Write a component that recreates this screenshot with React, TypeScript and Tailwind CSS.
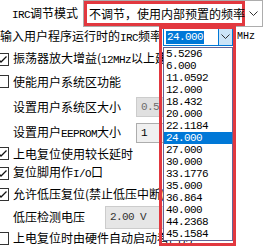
import React from 'react';

const freqs = ['5.5296', '6.000', '11.0592', '12.000', '18.432', '20.000', '22.1184', '24.000', '27.000', '30.000', '33.1776', '35.000', '36.864', '40.000', '44.2368', '45.1584'];

const mono = { fontFamily: '"Liberation Mono", monospace', fontSize: '11px', letterSpacing: '-0.6px' };

// half-width latin, like the old bitmap font
const L = ({ children }: { children: React.ReactNode }) => <span style={mono}>{children}</span>;

const Check = ({ checked }: { checked?: boolean }) => (
  <span className="-ml-[4px] mr-[4px] inline-flex h-[13px] w-[13px] shrink-0 items-center justify-center border border-[#333] bg-white">
    {checked && (
      <svg width="11" height="11" viewBox="0 0 11 11">
        <path d="M1.5 5.5 L4 8 L9.5 2.5" stroke="#111" strokeWidth="1.3" fill="none" />
      </svg>
    )}
  </span>
);

const Chevron = () => (
  <svg width="9" height="6" viewBox="0 0 9 6">
    <path d="M0.5 0.5 L4.5 4.5 L8.5 0.5" stroke="#333" strokeWidth="1" fill="none" />
  </svg>
);

export default function App() {
  return (
    <div
      className="relative h-[249px] w-[266px] overflow-hidden bg-white text-[12px] leading-none text-black"
      style={{ fontFamily: '"Noto Sans CJK SC", "Noto Sans", sans-serif' }}
    >
      {/* IRC mode */}
      <div className="flex h-[27px] items-center">
        <span className="w-[83px] whitespace-nowrap pl-[12px]"><L>IRC</L>调节模式</span>
        <div className="flex h-[27px] w-[180px] border border-[#adadad] bg-white">
          <div className="flex w-[161px] items-center whitespace-nowrap border-[3px] border-[#e2383f] pl-[2px]">不调节，使用内部预置的频率</div>
          <div className="flex flex-1 items-center justify-center">
            <Chevron />
          </div>
        </div>
      </div>

      {/* IRC freq */}
      <div className="flex h-[20px] items-center">
        <span className="w-[163px] whitespace-nowrap">输入用户程序运行时的<L>IRC</L>频率</span>
        <div className="flex h-[18px] w-[70px] border border-[#0078d7] bg-white">
          <div className="flex flex-1 items-center pl-[2px]">
            <span className="bg-[#0078d7] px-[1px] py-[1px] text-white" style={mono}>24.000</span>
          </div>
          <div className="flex w-[14px] items-center justify-center border-l border-[#0078d7] bg-[#cce4f7]">
            <Chevron />
          </div>
        </div>
        <span className="ml-[4px]" style={{ fontFamily: '"Liberation Mono", monospace', fontSize: '10px' }}>MHz</span>
      </div>

      <div className="flex h-[24px] items-center whitespace-nowrap">
        <Check checked />
        <span>振荡器放大增益(<L>12MHz</L>以上建议选择)</span>
      </div>
      <div className="flex h-[21px] items-center whitespace-nowrap">
        <Check />
        <span>使能用户系统区功能</span>
      </div>
      <div className="flex h-[30px] items-center whitespace-nowrap">
        <span className="w-[136px] pl-[13px]">设置用户系统区大小</span>
        <div className="flex h-[20px] w-[40px] items-center border border-[#cccccc] bg-[#e0e0e0] pl-[4px] text-[#6d6d6d]" style={mono}>0.5</div>
      </div>
      <div className="flex h-[22px] items-center whitespace-nowrap">
        <span className="w-[136px] pl-[13px]">设置用户<L>EEPROM</L>大小</span>
        <div className="flex h-[20px] w-[40px] items-center border border-[#adadad] bg-[#f0f0f0] pl-[4px]" style={mono}>1</div>
      </div>
      <div className="flex h-[19px] items-center whitespace-nowrap">
        <Check checked />
        <span>上电复位使用较长延时</span>
      </div>
      <div className="flex h-[20px] items-center whitespace-nowrap">
        <Check checked />
        <span>复位脚用作<L>I/O</L>口</span>
      </div>
      <div className="flex h-[22px] items-center whitespace-nowrap">
        <Check checked />
        <span>允许低压复位(禁止低压中断)</span>
      </div>
      <div className="flex h-[24px] items-center whitespace-nowrap">
        <span className="w-[105px] pl-[13px]">低压检测电压</span>
        <div className="flex h-[23px] w-[70px] items-center border border-[#cccccc] bg-[#e6e6e6] pl-[4px] text-[#333]" style={mono}>2.00 V</div>
      </div>
      <div className="flex h-[18px] items-center whitespace-nowrap">
        <Check />
        <span>上电复位时由硬件自动启动看门狗</span>
      </div>

      {/* dropdown list */}
      <div className="absolute left-[163px] top-[47px] w-[70px] border border-[#646496] bg-white">
        {freqs.map((f) => (
          <div
            key={f}
            className={`flex h-[12px] items-center pl-[2px] ${f === '24.000' ? 'bg-[#0078d7] text-white' : ''}`}
            style={mono}
          >
            {f}
          </div>
        ))}
      </div>
      <div className="pointer-events-none absolute left-[159px] top-[26px] h-[220px] w-[77px] border-[3px] border-[#e2383f]" />
    </div>
  );
}
